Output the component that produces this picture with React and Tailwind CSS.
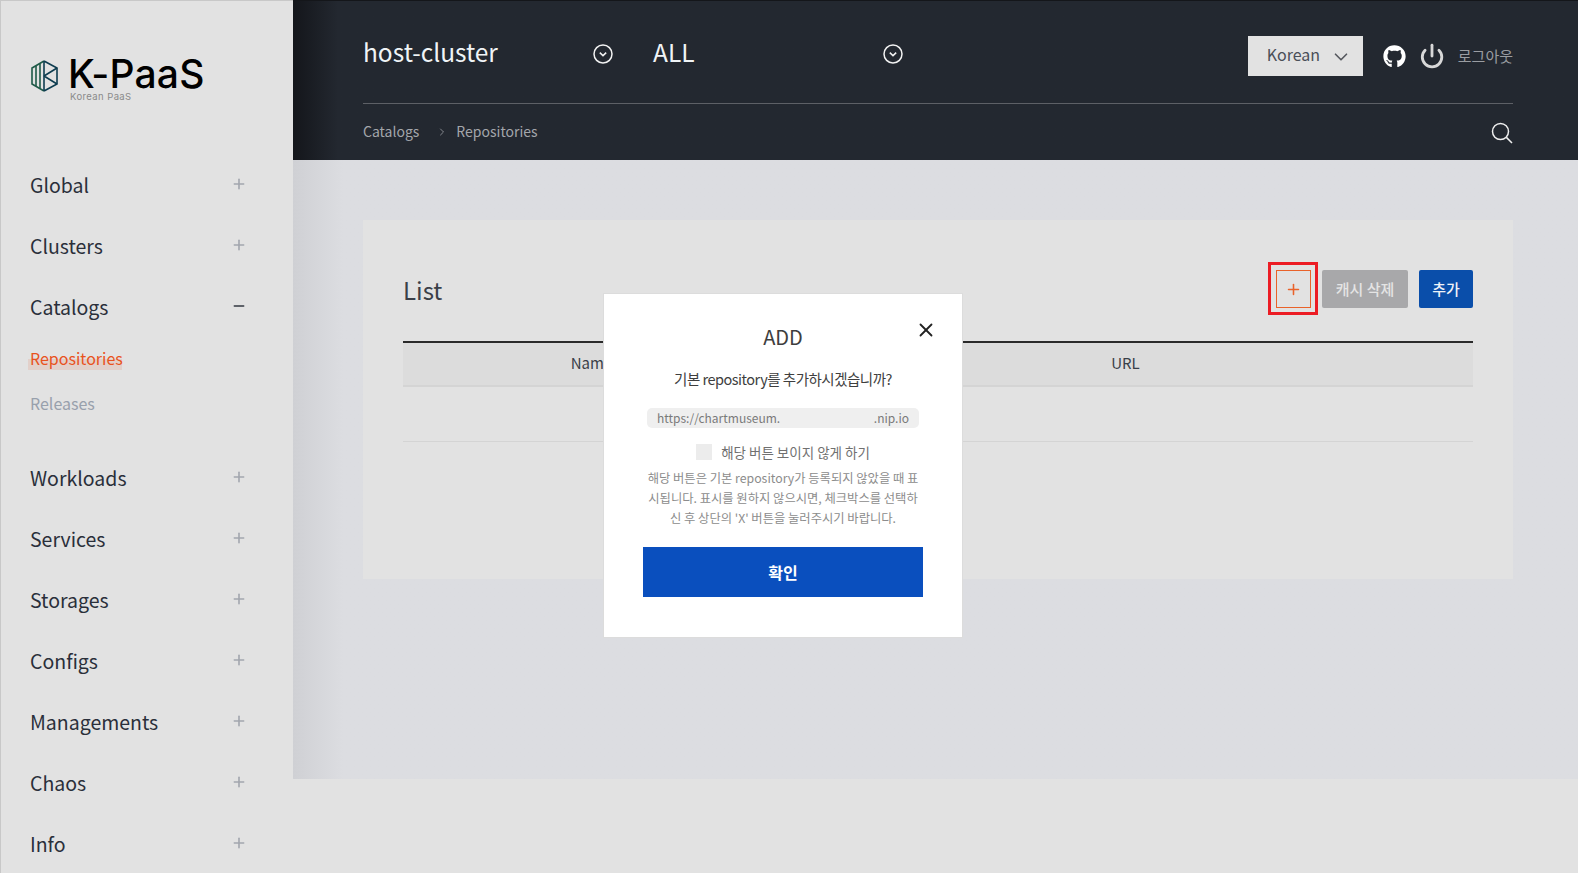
import { ChevronDown, Plus, Minus, X, Power, ChevronRight } from 'lucide-react';
import { FaGithub } from 'react-icons/fa';

const KR = "font-['Noto_Sans_CJK_KR','Noto_Sans',sans-serif]";

function Logo() {
  return (
    <div className="flex items-start gap-[10px] pl-[30px] pt-[54px]">
      <svg width="27" height="32" viewBox="0 0 27 32" fill="none" strokeWidth="1.6" className="mt-[5px]">
        <path d="M13 1 L1 8 V24 L13 31" stroke="#1f5a48" />
        <path d="M5 6 V26 M9 3.5 V28.5" stroke="#1f5a48" />
        <path d="M13 1 V31 M13 1 L26 8 V24 L13 31" stroke="#0e3d50" />
        <path d="M13 16 L26 8 M13 16 L26 24" stroke="#0e3d50" />
      </svg>
      <div className="flex flex-col mt-[1px]">
        <span className="font-['Inter',sans-serif] text-[39px] leading-[36px] font-medium text-black tracking-[0.2px]">K-PaaS</span>
        <span className="font-['Inter',sans-serif] text-[9.5px] leading-[9px] text-[#8a8a8a] tracking-[0.4px] ml-[2px]">Korean PaaS</span>
      </div>
    </div>
  );
}

function NavItem({ label, open }) {
  return (
    <div className="flex items-center justify-between h-[61px] pl-[29px] pr-[46px]">
      <span className="text-[19.5px] text-[#2a2f3a]">{label}</span>
      {open ? (
        <Minus size={16} strokeWidth={2.4} className="text-[#333842] mt-[-2px]" />
      ) : (
        <Plus size={16} strokeWidth={2.4} className="text-[#a2a6ae] mt-[-2px]" />
      )}
    </div>
  );
}

function Sidebar() {
  return (
    <aside className="w-[293px] shrink-0 bg-[#e2e2e2] border-l border-t border-[#c8c8c8] h-full flex flex-col overflow-hidden">
      <Logo />
      <nav className="mt-[53px]">
        <NavItem label="Global" />
        <NavItem label="Clusters" />
        <NavItem label="Catalogs" open />
        <div className="pl-[29px] flex flex-col pt-[9px] pb-[12px]">
          <div className="h-[45px]">
            <span className="relative inline-block text-[16px] leading-[24px] text-[#e9531d]">
              Repositories
              <span className="absolute left-[-2px] right-[1px] top-[13px] h-[11px] bg-[#e9531d]/12" />
            </span>
          </div>
          <div className="h-[44px] text-[16px] leading-[24px] text-[#98a0ac]">Releases</div>
        </div>
        <NavItem label="Workloads" />
        <NavItem label="Services" />
        <NavItem label="Storages" />
        <NavItem label="Configs" />
        <NavItem label="Managements" />
        <NavItem label="Chaos" />
        <NavItem label="Info" />
      </nav>
    </aside>
  );
}

function CircleChevron() {
  return (
    <svg width="20" height="20" viewBox="0 0 20 20" fill="none" stroke="#f2f2f2" strokeWidth="1.5">
      <circle cx="10" cy="10" r="9" />
      <path d="M6.8 8.6 L10 11.6 L13.2 8.6" />
    </svg>
  );
}

function SearchIcon() {
  return (
    <svg width="22" height="22" viewBox="0 0 22 22" fill="none" stroke="#efefef" strokeWidth="1.5" className="ml-auto mt-[2px]">
      <circle cx="9.5" cy="9.5" r="8" />
      <path d="M15.4 15.4 L21 21" />
    </svg>
  );
}

function Header() {
  return (
    <header className="h-[160px] bg-linear-to-r from-[#14161b] to-[#232830] to-[45px] border-t border-[#14161a] pl-[70px] pr-[65px] shrink-0">
      <div className="h-[103px] flex items-start border-b border-[#5d6066]">
        <div className="w-[251px] h-[60px] flex items-center justify-between pr-[1px] mt-[23px]">
          <span className="text-[24.5px] text-[#f0f4f6] mt-[-4px]">host-cluster</span>
          <CircleChevron />
        </div>
        <div className="w-[250px] ml-[39px] h-[60px] flex items-center justify-between mt-[23px]">
          <span className="text-[24.5px] text-[#f0f4f6] mt-[-4px]">ALL</span>
          <CircleChevron />
        </div>
        <div className="ml-auto flex items-center mt-[35px]">
          <div className="w-[115px] h-[40px] bg-[#e2e2e2] flex items-center justify-between pl-[19px] pr-[11px] text-[16px] text-[#4a4f58]">
            <span className="mt-[-4px]">Korean</span>
            <ChevronDown size={22} strokeWidth={1.8} className="text-[#55585e] mt-[1px]" />
          </div>
          <FaGithub size={23} className="text-white ml-[20px]" />
          <Power size={26} strokeWidth={2.6} className="text-[#d8d8d8] ml-[13px]" />
          <span className="text-[15px] text-[#9a9da2] ml-[13px]">로그아웃</span>
        </div>
      </div>
      <div className="h-[56px] flex items-center text-[14px] text-[#a3a6ab]">
        <span className="mt-[-2px]">Catalogs</span>
        <ChevronRight size={12} strokeWidth={1.5} className="ml-[17px] mr-[8px]" />
        <span className="mt-[-2px]">Repositories</span>
        <SearchIcon />
      </div>
    </header>
  );
}

function Card() {
  return (
    <section className="bg-[#e2e2e2] h-[359px] px-[40px] pt-[41px]">
      <div className="flex items-center h-[56px]">
        <h2 className="text-[24px] text-[#3a3f48] mt-[1px]">List</h2>
        <div className="ml-auto flex items-center">
          <div className="border-[3px] border-[#ec1c24] pt-[5px] pl-[5px] pr-[4px] pb-[4px] mr-[4px] mb-[1px]">
            <button className="w-[35px] h-[38px] border border-[#e9622a] flex items-center justify-center text-[#e9622a]">
              <Plus size={17} strokeWidth={2.2} />
            </button>
          </div>
          <button className="w-[86px] h-[38px] bg-[#a8a8aa] rounded-[2px] text-[15px] font-medium text-[#e4e4e4]">캐시 삭제</button>
          <button className="w-[54px] h-[38px] bg-[#0a4eaa] rounded-[2px] text-[15px] font-medium text-[#eef2f8] ml-[11px]">추가</button>
        </div>
      </div>
      <div className="mt-[24px] border-t-2 border-b-2 border-t-[#2a2a2a] border-b-[#d4d4d4] h-[46px] bg-[#dcdcdc] grid grid-cols-[375px_1fr] items-center text-[15px] text-[#3a3f48]">
        <span className="text-center pl-[2px] mt-[-2px]">Name</span>
        <span className="text-center mt-[-2px]">URL</span>
      </div>
      <div className="h-[55px] border-b border-[#d4d4d4]" />
    </section>
  );
}

function AddModal() {
  return (
    <div className="absolute left-[603px] top-[293px] w-[360px] h-[345px] bg-white border border-[#dcdcdc] flex flex-col items-center px-[39px]">
      <X size={22} strokeWidth={2} className="absolute right-[25px] top-[25px] text-[#222]" />
      <div className="mt-[28px] text-[20px] leading-[30px] text-[#3e3e3e]">ADD</div>
      <p className="mt-[14px] text-[14.5px] leading-[26px] tracking-[-0.5px] text-[#3e3e3e]">기본 repository를 추가하시겠습니까?</p>
      <div className="mt-[16px] w-[272px] h-[20px] rounded-[5px] bg-[#efefef] flex items-center justify-between px-[10px] text-[12px] text-[#7a7a7a]">
        <span>https://chartmuseum.</span>
        <span>.nip.io</span>
      </div>
      <div className="mt-[14px] flex items-center">
        <span className="w-[16px] h-[16px] bg-[#ececec] mr-[9px]" />
        <span className="text-[13.5px] leading-[20px] text-[#707070]">해당 버튼 보이지 않게 하기</span>
      </div>
      <p className="mt-[6px] w-[280px] text-center text-[12.3px] leading-[20px] text-[#8c8c8c] break-all">
        해당 버튼은 기본 repository가 등록되지 않았을 때 표시됩니다. 표시를 원하지 않으시면, 체크박스를 선택하신 후 상단의 'X' 버튼을 눌러주시기 바랍니다.
      </p>
      <button className="mt-[19px] w-[280px] h-[50px] shrink-0 bg-[#0a4fbe] text-[16px] font-bold text-white">확인</button>
    </div>
  );
}

export default function App() {
  return (
    <div className={`relative w-[1578px] h-[873px] flex overflow-hidden bg-[#e2e2e2] ${KR}`}>
      <Sidebar />
      <main className="flex-1 flex flex-col">
        <Header />
        <div className="h-[619px] bg-linear-to-r from-[#cfd0d4] to-[#dcdde1] to-[50px] pt-[60px] pl-[70px] pr-[65px] shrink-0">
          <Card />
        </div>
      </main>
      <AddModal />
    </div>
  );
}
